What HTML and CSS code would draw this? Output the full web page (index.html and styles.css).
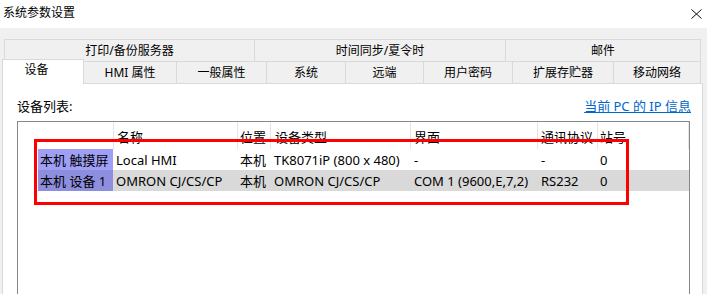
FILE: index.html
```html
<!DOCTYPE html>
<html lang="zh-CN">
<head>
<meta charset="utf-8">
<title>系统参数设置</title>
<link rel="stylesheet" href="styles.css">
</head>
<body>
<div class="titlebar">
  <span class="title">系统参数设置</span>
  <svg class="close" width="11" height="10" viewBox="0 0 11 10"><path d="M0.5 0.5 L10.5 9.5 M10.5 0.5 L0.5 9.5" stroke="#111" stroke-width="1" fill="none"/></svg>
</div>
<div class="dialog">
  <div class="tabrow row1">
    <div class="tab t-print">打印/备份服务器</div>
    <div class="tab t-time">时间同步/夏令时</div>
    <div class="tab t-mail last">邮件</div>
  </div>
  <div class="tabrow row2">
    <div class="tab selected t-dev">设备</div>
    <div class="tab t-hmi">HMI 属性</div>
    <div class="tab t-gen">一般属性</div>
    <div class="tab t-sys">系统</div>
    <div class="tab t-rem">远端</div>
    <div class="tab t-pwd">用户密码</div>
    <div class="tab t-ext">扩展存贮器</div>
    <div class="tab t-mob">移动网络</div>
  </div>
  <div class="panel">
    <div class="panel-head">
      <span class="label">设备列表:</span>
      <a class="link" href="#">当前 PC 的 IP 信息</a>
    </div>
    <div class="listbox">
      <div class="lv-row lv-header">
        <div class="c c0"></div>
        <div class="c c1">名称</div>
        <div class="c c2">位置</div>
        <div class="c c3">设备类型</div>
        <div class="c c4">界面</div>
        <div class="c c5">通讯协议</div>
        <div class="c c6">站号</div>
      </div>
      <div class="lv-row item">
        <div class="c c0"><span class="sel sel1">本机 触摸屏</span></div>
        <div class="c c1">Local HMI</div>
        <div class="c c2">本机</div>
        <div class="c c3">TK8071iP (800 x 480)</div>
        <div class="c c4">-</div>
        <div class="c c5">-</div>
        <div class="c c6">0</div>
      </div>
      <div class="lv-row item alt">
        <div class="c c0"><span class="sel sel2">本机 设备 1</span></div>
        <div class="c c1">OMRON CJ/CS/CP</div>
        <div class="c c2">本机</div>
        <div class="c c3">OMRON CJ/CS/CP</div>
        <div class="c c4">COM 1 (9600,E,7,2)</div>
        <div class="c c5">RS232</div>
        <div class="c c6">0</div>
      </div>
    </div>
    <div class="redbox"></div>
  </div>
</div>
</body>
</html>
```
FILE: styles.css
```css
* { box-sizing: border-box; }
html, body { margin: 0; padding: 0; }
body {
  background: #f0f0f0;
  font-family: "Noto Sans", "Noto Sans CJK SC", sans-serif;
  color: #000;
  width: 707px;
  height: 294px;
  overflow: hidden;
}
.titlebar {
  height: 28px;
  background: #fff;
  display: flex;
  align-items: center;
  justify-content: space-between;
  padding: 0 5px 2px 3px;
}
.title { font-size: 12px; line-height: 16px; }
.close { display: block; margin-top: 1px; }

.dialog { padding-top: 11px; }
.tabrow { display: flex; height: 22px; font-size: 12px; }
.row1 { margin-left: 4px; }
.row2 { margin-left: 2px; }
.tab {
  height: 22px;
  border-top: 1px solid #d9d9d9;
  border-right: 1px solid #d9d9d9;
  background: #f0f0f0;
  display: flex;
  align-items: center;
  justify-content: center;
  line-height: 16px;
  white-space: nowrap;
  padding-top: 1px;
}
.row1 .t-print { border-left: 1px solid #d9d9d9; width: 251px; }
.t-time { width: 251px; }
.t-mail { width: 195px; }
.tab.selected {
  position: relative;
  z-index: 2;
  background: #fff;
  height: 25px;
  margin-top: -2px;
  margin-bottom: -1px;
  border-left: 1px solid #d9d9d9;
  align-items: flex-start;
  padding-top: 2px;
  padding-right: 13px;
}
.t-dev { width: 82px; }
.t-hmi { width: 93px; }
.t-gen { width: 90px; }
.t-sys { width: 79px; }
.t-rem { width: 78px; }
.t-pwd { width: 89px; }
.t-ext { width: 101px; }
.t-mob { width: 87px; }

.panel {
  position: relative;
  margin-left: 2px;
  width: 701px;
  height: 260px;
  background: #fff;
  border: 1px solid #d9d9d9;
  padding: 14px 12px 0 14px;
}
.panel-head {
  display: flex;
  justify-content: space-between;
  align-items: center;
  height: 16px;
  font-size: 13px;
  line-height: 16px;
  margin-right: -1px;
}
.link { color: #0066cc; text-decoration: underline; }
.listbox {
  margin-top: 7px;
  width: 673px;
  height: 200px;
  border: 1px solid #828790;
  font-size: 13px;
}
.lv-row {
  display: flex;
  height: 21px;
  line-height: 18px;
  white-space: nowrap;
}
.lv-header { height: 27px; }
.c { overflow: hidden; padding-left: 3px; display: flex; align-items: center; }
.lv-header .c { border-right: 1px solid #e5e5e5; padding-top: 2px; }
.c0 { width: 96px; }
.c1 { width: 124px; }
.c2 { width: 33px; padding-left: 2px; }
.c3 { width: 140px; }
.c4 { width: 127px; }
.c5 { width: 60px; }
.c6 { width: 91px; padding-left: 2px; }
.lv-header .c3 { padding-left: 4px; }
.item .c1 { padding-left: 2px; }
.item .c0 { padding-left: 20px; align-items: stretch; }
.item .c3 { padding-left: 3px; }
.sel {
  flex: 1;
  padding-left: 2px;
  display: flex;
  align-items: center;
  margin-right: 1px;
}
.sel1 { background: #9f9ff6; }
.sel2 { background: #8e8edf; }
.alt .c1, .alt .c2, .alt .c3, .alt .c4, .alt .c5, .alt .c6 { background: #d9d9d9; }
.alt .c1 { margin-left: -1px; padding-left: 3px; width: 125px; }

.redbox {
  position: absolute;
  left: 31px;
  top: 55px;
  width: 595px;
  height: 66px;
  border: 3px solid #ff0000;
}
```
